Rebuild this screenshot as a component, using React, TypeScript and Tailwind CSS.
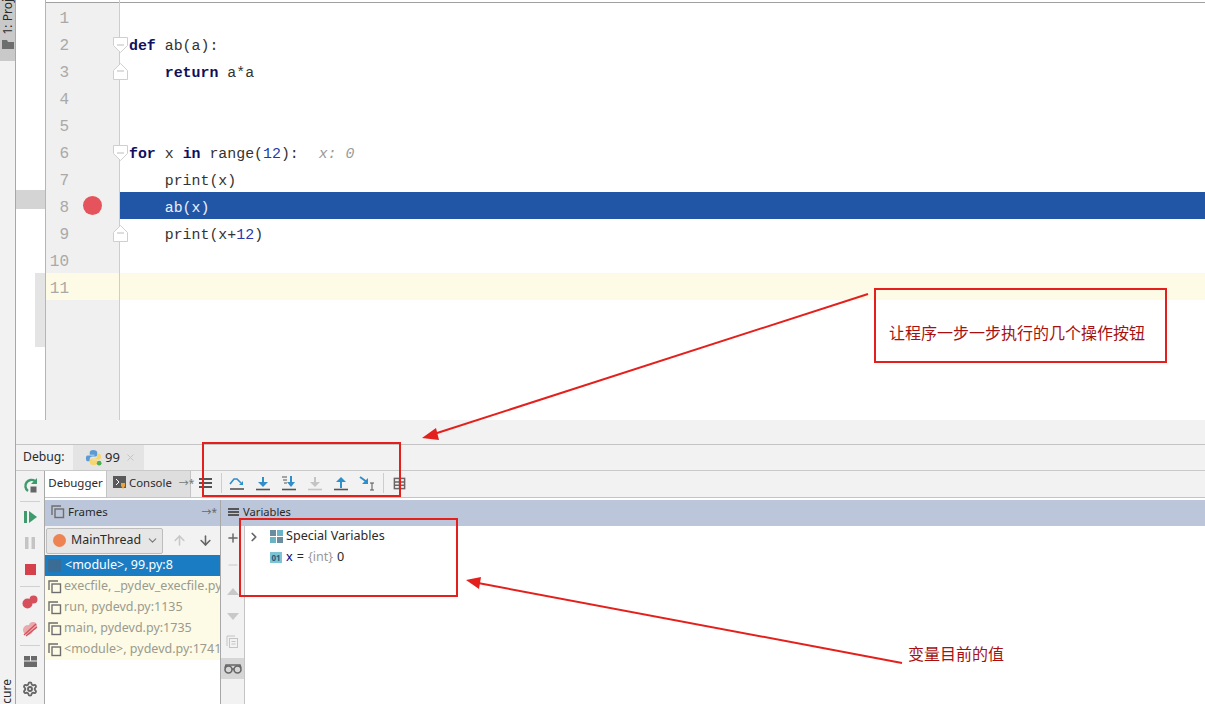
import { ArrowDown, ArrowUp, ChevronDown, ChevronRight, Minus, Plus, Settings, X } from 'lucide-react';

const ui = "font-['Noto_Sans','Noto_Sans_CJK_SC',sans-serif]";

function Kw({ children }: { children: string }) {
  return <span className="font-bold text-[#10105e]">{children}</span>;
}

function Num({ children }: { children: string }) {
  return <span className="text-[#2a35a8]">{children}</span>;
}

// one editor line, 27px tall (text sits a little low in the row)
function CodeLine({ children, className = '' }: { children?: React.ReactNode; className?: string }) {
  return <div className={`h-[27px] whitespace-pre pl-[9px] pt-[3px] leading-[27px] ${className}`}>{children}</div>;
}

function GutterLine({ n, fold, bp, hl }: { n: number; fold?: 'open' | 'close'; bp?: boolean; hl?: boolean }) {
  return (
    <div className={`relative flex h-[27px] items-center pt-[4px] ${hl ? 'bg-[#fdfbe6]' : ''}`}>
      <span className="w-[23px] text-right text-[16px] text-[#a9a9a9]">{n}</span>
      {bp && <span className="absolute left-[37px] top-[4px] h-[19px] w-[19px] rounded-full bg-[#e5545c]" />}
      {fold && (
        <svg className={`absolute left-[67px] ${fold === 'open' ? 'top-[7px]' : 'top-[6px]'}`} width="15" height="17" viewBox="0 0 15 17">
          <path
            d={fold === 'open' ? 'M.5 .5h14v8l-7 7-7-7z' : 'M.5 16.500h14v-9l-7-7-7 7z'}
            fill="#fff"
            stroke="#cfcfcf"
          />
          <path d="M4 8h7" stroke="#bdbdbd" />
        </svg>
      )}
    </div>
  );
}

function StepIcon({ children }: { children: React.ReactNode }) {
  return (
    <svg width="16" height="16" viewBox="0 0 16 16" fill="none" className="shrink-0">
      {children}
    </svg>
  );
}

function FrameIcon() {
  return (
    <svg width="14" height="14" viewBox="0 0 14 14" fill="none" stroke="#6e6e6e" strokeWidth="1.400" className="shrink-0">
      <path d="M1 10V1h9" />
      <rect x="4" y="4" width="8.500" height="8.500" />
    </svg>
  );
}

function FrameRow({ text }: { text: string }) {
  return (
    <div className="flex h-[21px] items-center gap-[2px] bg-[#fdfbe6] pl-[3px] text-[12.5px] text-[#9a9a8e]">
      <FrameIcon />
      <span className="whitespace-nowrap">{text}</span>
    </div>
  );
}

export default function App() {
  return (
    <div className={`relative flex h-[704px] w-[1205px] overflow-hidden bg-white text-[#2a2a2a] ${ui}`}>
      {/* left tool window strip */}
      <div className="flex w-[16px] shrink-0 flex-col justify-between border-r border-[#a8a8a8] bg-[#f2f2f2]">
        <div className="flex h-[61px] w-[15px] flex-col items-center justify-end overflow-hidden bg-[#c9c9c9] pb-[12px]">
          <span className="rotate-180 whitespace-nowrap text-[12px] leading-[12px] [writing-mode:vertical-rl]">1: Proj</span>
          <svg width="12" height="9" viewBox="0 0 12 9" className="mt-[5px] shrink-0">
            <path d="M0 0h5l1 2h6v7H0z" fill="#6e6e6e" />
          </svg>
        </div>
        <span className="rotate-180 text-[12px] leading-[14px] [writing-mode:vertical-rl]">cure</span>
      </div>

      <div className="flex min-w-0 flex-1 flex-col">
        {/* editor */}
        <div className="flex h-[420px] shrink-0">
          <div className="flex w-[30px] shrink-0 flex-col border-r border-[#b5b5b5] pt-[190px]">
            <div className="h-[19px] bg-[#d4d4d4]" />
            <div className="mt-[64px] ml-[19px] h-[74px] bg-[#e4e4e4]" />
          </div>
          <div className="w-[74px] shrink-0 border-r border-[#cdcdcd] bg-[#f0f0f0] font-['Liberation_Mono',monospace]">
            <div className="h-[3px] bg-white">
              <div className="h-[2px]" />
              <div className="h-px bg-[#a0a0a0]" />
            </div>
            <GutterLine n={1} />
            <GutterLine n={2} fold="open" />
            <GutterLine n={3} fold="close" />
            <GutterLine n={4} />
            <GutterLine n={5} />
            <GutterLine n={6} fold="open" />
            <GutterLine n={7} />
            <GutterLine n={8} bp />
            <GutterLine n={9} fold="close" />
            <GutterLine n={10} />
            <GutterLine n={11} hl />
          </div>
          <div className="min-w-0 flex-1 font-['Liberation_Mono',monospace] text-[14.9px] text-[#333]">
            <div className="h-[3px]">
              <div className="h-[2px]" />
              <div className="h-px bg-[#a0a0a0]" />
            </div>
            <CodeLine />
            <CodeLine><Kw>def</Kw> ab(a):</CodeLine>
            <CodeLine>{'    '}<Kw>return</Kw> a*a</CodeLine>
            <CodeLine />
            <CodeLine />
            <CodeLine>
              <Kw>for</Kw> x <Kw>in</Kw> range(<Num>12</Num>):
              <span className="ml-[2px] italic text-[#9a9a9a]">{'  x: 0'}</span>
            </CodeLine>
            <CodeLine>{'    '}print(x)</CodeLine>
            <CodeLine className="bg-[#2155a6] text-[#e8f0fa]">{'    '}ab(x)</CodeLine>
            <CodeLine>{'    '}print(x+<Num>12</Num>)</CodeLine>
            <CodeLine />
            <CodeLine className="bg-[#fdfbe6]" />
          </div>
        </div>

        <div className="h-[25px] shrink-0 border-b border-[#c4c4c4] bg-[#f2f2f2]" />

        {/* debug tool window */}
        <div className="flex min-h-0 flex-1 flex-col bg-[#f2f2f2]">
          <div className="flex h-[25px] shrink-0 items-center text-[12.2px]">
            <span className="w-[57px] pl-[7px]">Debug:</span>
            <div className="flex h-[25px] w-[71px] items-center bg-[#e4e4e4] pl-[12px]">
              <svg width="17" height="17" viewBox="0 0 18 18" className="shrink-0">
                <path d="M9 1c-3 0-4 1-4 3v2h5v1H3C1 7 1 9 1 10.500s1 2.500 2 2.500h2v-2c0-2 1-3 3-3h3c1 0 2-1 2-2V4c0-2-2-3-4-3z" fill="#5b9bd5" />
                <path d="M9 17c3 0 4-1 4-3v-2H8v-1h7c2 0 2-2 2-3.500S16 5 15 5h-2v2c0 2-1 3-3 3H7c-1 0-2 1-2 2v2c0 2 2 3 4 3z" fill="#f5d76e" />
                <circle cx="15" cy="15" r="2.500" fill="#4caf50" />
              </svg>
              <span className="ml-[3px] text-[13px]">99</span>
              <X size={11} className="ml-[5px] text-[#c2c2c2]" />
            </div>
          </div>

          <div className="flex min-h-0 flex-1 border-t border-[#c9c9c9]">
            {/* debug actions */}
            <div className="flex w-[29px] shrink-0 flex-col items-center border-r border-[#a8a8a8] pt-[6px]">
              <svg width="16" height="16" viewBox="0 0 16 16" fill="none" className="shrink-0">
                <path d="M13 4A6 6 0 1 0 6 14" stroke="#3f9b6c" strokeWidth="2.400" />
                <path d="M15 1v6H9z" fill="#3f9b6c" />
                <rect x="8.500" y="9.500" width="6" height="6" fill="#666" />
              </svg>
              <div className="mt-[8px] mb-[8px] h-px w-[20px] shrink-0 bg-[#d0d0d0]" />
              <svg width="14" height="14" viewBox="0 0 14 14" fill="#3f9b6c" className="shrink-0">
                <rect x="1" y="1" width="3" height="12" />
                <path d="M6 1l8 6-8 6z" />
              </svg>
              <svg width="12" height="14" viewBox="0 0 12 14" fill="#c4c4c4" className="mt-[12px] shrink-0">
                <rect x="1" y="1" width="3.500" height="12" />
                <rect x="7.500" y="1" width="3.500" height="12" />
              </svg>
              <div className="mt-[14px] h-[11px] w-[11px] shrink-0 bg-[#d5404a]" />
              <div className="mt-[11px] mb-[8px] h-px w-[20px] shrink-0 bg-[#d0d0d0]" />
              <svg width="16" height="14" viewBox="0 0 16 14" fill="#d5505a" className="shrink-0">
                <circle cx="5.500" cy="8.500" r="5" />
                <circle cx="11.500" cy="4.500" r="4" />
              </svg>
              <svg width="16" height="16" viewBox="0 0 16 16" className="mt-[12px] shrink-0">
                <circle cx="6" cy="9" r="5" fill="#e9a9ad" />
                <circle cx="11" cy="5" r="4" fill="#e9a9ad" />
                <path d="M2 14L14 3M4 15L15 6" stroke="#d5505a" strokeWidth="1.300" />
              </svg>
              <div className="mt-[8px] mb-[10px] h-px w-[20px] shrink-0 bg-[#d0d0d0]" />
              <svg width="13" height="11" viewBox="0 0 13 11" fill="#6a6a6a" className="shrink-0">
                <rect x="0" y="0" width="6" height="4.500" />
                <rect x="7" y="0" width="6" height="4.500" />
                <rect x="0" y="5.500" width="13" height="5.500" />
              </svg>
              <Settings size={16} strokeWidth={2.800} className="mt-[14px] shrink-0 text-[#666]" />
            </div>

            <div className="flex min-w-0 flex-1 flex-col">
              {/* tabs + step toolbar */}
              <div className="flex h-[27px] shrink-0 items-center border-b border-[#c4c4c4]">
                <div className="flex h-full w-[61px] items-center justify-center bg-white pb-[2px] text-[11.5px]">Debugger</div>
                <div className="flex h-full w-[85px] items-center border-l border-r border-[#c4c4c4] bg-[#dedede] pb-[2px] pl-[6px] text-[11.4px]">
                  <svg width="14" height="14" viewBox="0 0 14 14" className="shrink-0">
                    <rect width="13" height="12" fill="#5a5a5a" />
                    <path d="M3 3l3 3-3 3" fill="none" stroke="#fff" />
                    <path d="M8 7h4v3l-2 3-2-3z" fill="#e8a33d" />
                  </svg>
                  <span className="ml-[2px]">Console</span>
                  <span className="ml-[7px] text-[10px] text-[#777]">→*</span>
                </div>
                <div className="-mt-[2px] flex h-[20px] w-[31px] flex-col items-center justify-center gap-[2px] border-r border-[#cdcdcd] pr-[2px]">
                  <span className="h-[2px] w-[13px] bg-[#555]" />
                  <span className="h-[2px] w-[13px] bg-[#555]" />
                  <span className="h-[2px] w-[13px] bg-[#555]" />
                </div>
                <div className="-mt-[2px] flex items-center gap-[10px] pl-[7px]">
                  <StepIcon>
                    <path d="M1 9l4-5h3l4 4" stroke="#2f8fc8" strokeWidth="1.600" />
                    <path d="M14 6v4h-4z" fill="#2f8fc8" />
                    <path d="M1 14h14" stroke="#555" strokeWidth="1.600" />
                  </StepIcon>
                  <StepIcon>
                    <path d="M8 2v6" stroke="#2f8fc8" strokeWidth="2" />
                    <path d="M3 7h10l-5 5z" fill="#2f8fc8" />
                    <path d="M1 14.500h14" stroke="#555" strokeWidth="1.600" />
                  </StepIcon>
                  <StepIcon>
                    <path d="M1 2h5M2 5h4M3 8h3" stroke="#555" />
                    <path d="M10 1v6" stroke="#2f8fc8" strokeWidth="2" />
                    <path d="M6 7h8l-4 5z" fill="#2f8fc8" />
                    <path d="M1 14.500h14" stroke="#555" strokeWidth="1.600" />
                  </StepIcon>
                  <StepIcon>
                    <path d="M8 2v6" stroke="#c4c4c4" strokeWidth="2" />
                    <path d="M3 7h10l-5 5z" fill="#c4c4c4" />
                    <path d="M1 14.500h14" stroke="#c4c4c4" strokeWidth="1.600" />
                  </StepIcon>
                  <StepIcon>
                    <path d="M8 7v6" stroke="#2f8fc8" strokeWidth="2" />
                    <path d="M3 7h10L8 2z" fill="#2f8fc8" />
                    <path d="M1 14.500h14" stroke="#555" strokeWidth="1.600" />
                  </StepIcon>
                  <svg width="18" height="16" viewBox="0 0 18 16" fill="none">
                    <path d="M1 2l7 5" stroke="#2f8fc8" strokeWidth="2" />
                    <path d="M9 3v6H3z" fill="#2f8fc8" />
                    <path d="M11 8h4M13 8v7M11 15h4" stroke="#555" />
                  </svg>
                </div>
                <div className="-mt-[2px] ml-[6px] mr-[9px] h-[20px] w-px bg-[#cdcdcd]" />
                <svg width="13" height="13" viewBox="0 0 14 14" fill="none" stroke="#6e6464" strokeWidth="1.600" className="-mt-[2px]">
                  <rect x="1.500" y="1.500" width="11" height="11" />
                  <path d="M1.500 5.500h11M1.500 9h11M7 1.500v11" />
                </svg>
              </div>

              <div className="h-[2px] shrink-0 bg-white" />

              <div className="flex min-h-0 flex-1">
                {/* frames */}
                <div className="flex w-[176px] shrink-0 flex-col border-r border-[#a8a8a8] bg-white">
                  <div className="flex h-[26px] shrink-0 items-center gap-[3px] bg-[#bcc6da] pb-[2px] pl-[6px] pr-[3px] text-[11.5px]">
                    <FrameIcon />
                    <span>Frames</span>
                    <span className="ml-auto text-[10px] text-[#666]">→*</span>
                  </div>
                  <div className="flex h-[29px] shrink-0 items-center bg-[#f2f2f2] pl-[1px]">
                    <div className="flex h-[26px] w-[117px] items-center gap-[5px] rounded-[2px] border border-[#bdbdbd] bg-[#e6e6e6] pl-[6px] text-[12.4px]">
                      <span className="h-[13px] w-[13px] shrink-0 rounded-full bg-[#ee8250]" />
                      <span>MainThread</span>
                      <ChevronDown size={13} className="shrink-0 text-[#777]" />
                    </div>
                    <ArrowUp size={15} strokeWidth={2.500} className="ml-[9px] text-[#c8c8c8]" />
                    <ArrowDown size={15} strokeWidth={2.500} className="ml-[11px] text-[#666]" />
                  </div>
                  <div className="flex h-[21px] shrink-0 items-center gap-[4px] bg-[#1a7dc4] pl-[3px] text-[12.5px] text-white">
                    <span className="h-[13px] w-[13px] bg-[#3a6d96]" />
                    <span>&lt;module&gt;, 99.py:8</span>
                  </div>
                  <div className="overflow-hidden">
                    <FrameRow text="execfile, _pydev_execfile.py:18" />
                    <FrameRow text="run, pydevd.py:1135" />
                    <FrameRow text="main, pydevd.py:1735" />
                    <FrameRow text="<module>, pydevd.py:1741" />
                  </div>
                </div>

                {/* variables */}
                <div className="flex min-w-0 flex-1 flex-col">
                  <div className="flex h-[26px] shrink-0 items-center gap-[4px] bg-[#bcc6da] pb-[2px] pl-[7px] text-[11.2px]">
                    <div className="flex flex-col gap-[1px]">
                      <span className="h-[2px] w-[11px] bg-[#555]" />
                      <span className="h-[2px] w-[11px] bg-[#555]" />
                      <span className="h-[2px] w-[11px] bg-[#555]" />
                    </div>
                    <span>Variables</span>
                  </div>
                  <div className="flex min-h-0 flex-1">
                    <div className="flex w-[24px] shrink-0 flex-col items-center border-r border-[#c4c4c4] bg-[#f2f2f2] pt-[5px]">
                      <Plus size={14} strokeWidth={2.500} className="shrink-0 text-[#666]" />
                      <Minus size={14} strokeWidth={2} className="mt-[13px] shrink-0 text-[#c8c8c8]" />
                      <svg width="12" height="7" viewBox="0 0 12 7" fill="#c8c8c8" className="mt-[16px] shrink-0">
                        <path d="M6 0l6 7H0z" />
                      </svg>
                      <svg width="12" height="7" viewBox="0 0 12 7" fill="#c8c8c8" className="mt-[18px] shrink-0">
                        <path d="M6 7l6-7H0z" />
                      </svg>
                      <svg width="13" height="14" viewBox="0 0 13 14" fill="none" stroke="#c4c4c4" className="mt-[15px] shrink-0">
                        <path d="M1 11V1h8" />
                        <rect x="3.500" y="3.500" width="8" height="9" />
                        <path d="M5.500 6.500h4M5.500 9h4" />
                      </svg>
                      <div className="mt-[9px] flex h-[21px] w-[23px] shrink-0 items-center justify-center bg-[#d6d6d6]">
                        <svg width="18" height="10" viewBox="0 0 18 10" fill="none" stroke="#666" strokeWidth="1.600">
                          <circle cx="4.500" cy="5.500" r="3.500" />
                          <circle cx="13.500" cy="5.500" r="3.500" />
                          <path d="M8 5h2M1 4l1-3h14l1 3" />
                        </svg>
                      </div>
                    </div>
                    <div className="min-w-0 flex-1 bg-white text-[12.6px]">
                      <div className="flex h-[21px] items-center pl-[2px]">
                        <ChevronRight size={14} strokeWidth={3} className="text-[#666]" />
                        <svg width="13" height="13" viewBox="0 0 13 13" className="ml-[9px]">
                          <rect width="6" height="6" fill="#6a8d9e" />
                          <rect x="7" width="6" height="6" fill="#6ab3c4" />
                          <rect y="7" width="6" height="6" fill="#6ab3c4" />
                          <rect x="7" y="7" width="6" height="6" fill="#6a8d9e" />
                        </svg>
                        <span className="ml-[3px]">Special Variables</span>
                      </div>
                      <div className="flex h-[21px] items-center gap-[4px] pl-[25px]">
                        <span className="flex h-[11px] w-[12px] items-center justify-center bg-[#7cc4d4] text-[8px] font-bold leading-none text-[#2a5a7a]">01</span>
                        <span className="text-[#000080]">x</span>
                        <span>=</span>
                        <span className="text-[#9a9a9a]">{'{int}'}</span>
                        <span>0</span>
                      </div>
                    </div>
                  </div>
                </div>
              </div>
            </div>
          </div>
        </div>
      </div>

      {/* hand drawn annotations on top of the screenshot */}
      <div className="absolute left-[874px] top-[288px] h-[75px] w-[293px] border-2 border-[#e3201c]" />
      <div className="absolute left-[202px] top-[442px] h-[55px] w-[199px] border-2 border-[#e3201c]" />
      <div className="absolute left-[239px] top-[518px] h-[79px] w-[219px] border-2 border-[#e3201c]" />
      <span className="absolute left-[889px] top-[322px] text-[16px] leading-[22px] text-[#a81010]">让程序一步一步执行的几个操作按钮</span>
      <span className="absolute left-[908px] top-[643px] text-[16px] leading-[22px] text-[#a81010]">变量目前的值</span>
      <svg className="pointer-events-none absolute left-0 top-0" width="1205" height="704" fill="none">
        <path d="M868 294L434 434" stroke="#e3201c" strokeWidth="2" />
        <path d="M422 438l14-10 3 12z" fill="#e3201c" />
        <path d="M902 663L478 583" stroke="#e3201c" strokeWidth="2" />
        <path d="M466 580l15-3-2 12z" fill="#e3201c" />
      </svg>
    </div>
  );
}
